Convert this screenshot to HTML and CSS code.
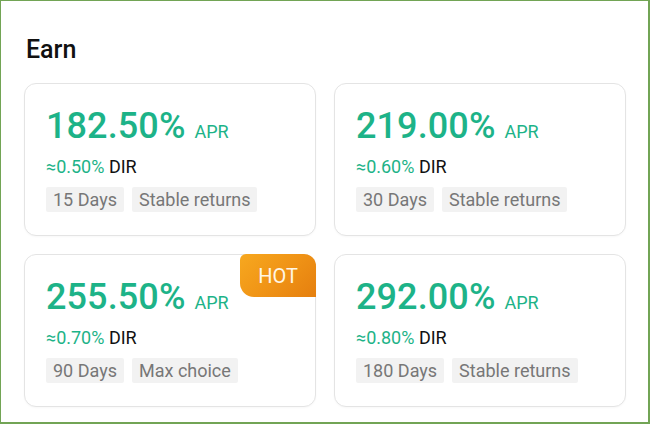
FILE: index.html
```html
<!DOCTYPE html>
<html lang="en">
<head>
<meta charset="utf-8">
<title>Earn</title>
<link rel="stylesheet" href="styles.css">
</head>
<body>
<div class="page">
  <h1 class="title">Earn</h1>
  <div class="grid">
    <div class="card">
      <div class="apr"><span class="rate">182.50%</span><span class="apr-label">APR</span></div>
      <div class="dir"><span class="dir-rate">≈0.50%</span> DIR</div>
      <div class="tags"><span class="tag">15 Days</span><span class="tag">Stable returns</span></div>
    </div>
    <div class="card">
      <div class="apr"><span class="rate">219.00%</span><span class="apr-label">APR</span></div>
      <div class="dir"><span class="dir-rate">≈0.60%</span> DIR</div>
      <div class="tags"><span class="tag">30 Days</span><span class="tag">Stable returns</span></div>
    </div>
    <div class="card">
      <span class="hot">HOT</span>
      <div class="apr"><span class="rate">255.50%</span><span class="apr-label">APR</span></div>
      <div class="dir"><span class="dir-rate">≈0.70%</span> DIR</div>
      <div class="tags"><span class="tag">90 Days</span><span class="tag">Max choice</span></div>
    </div>
    <div class="card">
      <div class="apr"><span class="rate">292.00%</span><span class="apr-label">APR</span></div>
      <div class="dir"><span class="dir-rate">≈0.80%</span> DIR</div>
      <div class="tags"><span class="tag">180 Days</span><span class="tag">Stable returns</span></div>
    </div>
  </div>
</div>
</body>
</html>
```
FILE: styles.css
```css
html, body {
  margin: 0;
  padding: 0;
  background: #ffffff;
}
body {
  font-family: Roboto, "Noto Sans", Arial, sans-serif;
}
.page {
  width: 650px;
  height: 424px;
  box-sizing: border-box;
  border-style: solid;
  border-color: #72a455;
  border-width: 1px 2px 2px 1px;
  padding: 34px 22px 0 23px;
  background: #fff;
}
.title {
  margin: 0 0 19px 2px;
  font-size: 25px;
  line-height: 29px;
  font-weight: 500;
  color: #111;
}
.grid {
  display: grid;
  grid-template-columns: 292px 292px;
  column-gap: 18px;
  row-gap: 18px;
}
.card {
  position: relative;
  box-sizing: border-box;
  height: 153px;
  border: 1px solid #e4e4e4;
  border-radius: 12px;
  padding: 21px 20px 0 21px;
  background: #fff;
  box-shadow: 0 1px 2px rgba(0,0,0,0.03);
}
.apr {
  display: flex;
  align-items: baseline;
  line-height: 42px;
  color: #1db388;
}
.rate {
  font-size: 36px;
  font-weight: 500;
  letter-spacing: 0.1px;
}
.apr-label {
  font-size: 18px;
  margin-left: 9px;
}
.dir {
  margin-top: 2px;
  font-size: 18px;
  line-height: 24px;
  color: #111;
}
.dir-rate {
  color: #1db388;
}
.tags {
  display: flex;
  gap: 8px;
  margin-top: 8px;
}
.tag {
  font-size: 18px;
  line-height: 25px;
  padding: 0 7px;
  background: #f2f2f2;
  color: #777;
  border-radius: 2px;
}
.hot {
  position: absolute;
  top: -1px;
  right: -1px;
  width: 76px;
  height: 43px;
  box-sizing: border-box;
  display: flex;
  align-items: center;
  justify-content: center;
  font-size: 20px;
  color: #fff6e6;
  background: linear-gradient(135deg, #f7a81f 0%, #f09416 50%, #e57f0f 100%);
  border-radius: 6px 12px 0 14px;
}
```
